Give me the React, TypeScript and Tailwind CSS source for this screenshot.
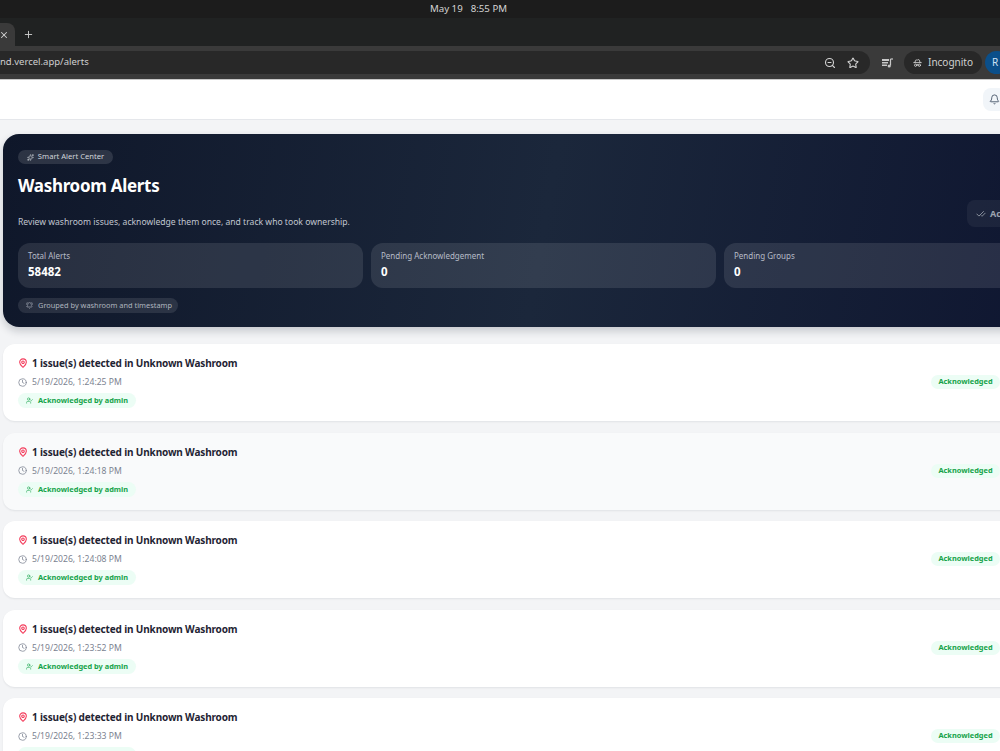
import { Bell, CheckCheck, Clock, MapPin, Plus, Sparkles, Star, UserCheck, X, ZoomOut, HatGlasses, BellRing } from "lucide-react";

const font = "font-['Noto_Sans','Open_Sans',sans-serif]";

const rows = [
  { time: "5/19/2026, 1:24:25 PM", alt: false },
  { time: "5/19/2026, 1:24:18 PM", alt: true },
  { time: "5/19/2026, 1:24:08 PM", alt: false },
  { time: "5/19/2026, 1:23:52 PM", alt: false },
  { time: "5/19/2026, 1:23:33 PM", alt: false },
];

function Stat({ label, value }: { label: string; value: string }) {
  return (
    <div className="h-[45px] flex-1 rounded-xl bg-white/[0.1] px-[10px] pt-[7px]">
      <div className="text-[8px] leading-[12px] text-[#b6bcc7]">{label}</div>
      <div className="mt-[1px] text-[11.5px] font-bold leading-[17px] text-white">{value}</div>
    </div>
  );
}

function AlertRow({ time, alt }: { time: string; alt: boolean }) {
  return (
    <div className={`flex h-[77px] items-start justify-between rounded-xl pl-[15px] pt-[11px] shadow-[0_1px_2px_rgba(15,23,42,0.08)] ${alt ? "bg-[#f9fafb]" : "bg-white"}`}>
      <div className="flex flex-col items-start">
        <div className="flex h-[16px] items-center gap-[4px]">
          <MapPin size={10} strokeWidth={2.6} className="text-[#f43f5e]" />
          <span className="text-[10px] font-bold leading-[14px] tracking-[-0.15px] text-[#1f2433]">1 issue(s) detected in Unknown Washroom</span>
        </div>
        <div className="mt-[4px] flex h-[14px] items-center gap-[5px] text-[#7b8290]">
          <Clock size={9} strokeWidth={2} />
          <span className="text-[8.6px] leading-[12px]">{time}</span>
        </div>
        <div className="mt-[4px] flex h-[15px] items-center gap-[5px] rounded-full bg-[#ecfdf5] px-[8px]">
          <UserCheck size={7} strokeWidth={2} className="text-[#16a34a]" />
          <span className="text-[7.4px] font-bold leading-[11px] text-[#16a34a]">Acknowledged by admin</span>
        </div>
      </div>
      <div className="mt-[20px] mr-[84px] flex h-[14px] w-[69px] shrink-0 items-center justify-center rounded-full bg-[#ecfdf5] text-[7.4px] font-bold text-[#16a34a]">
        Acknowledged
      </div>
    </div>
  );
}

export default function App() {
  return (
    <div className={`h-[751px] w-[1000px] overflow-hidden bg-[#f3f4f6] ${font}`}>
      <div className="flex h-[18px] items-center justify-center gap-[8px] bg-[#1c1c1c] pr-[63px] text-[9.7px] text-[#d4d4d4]">
        <span>May 19</span>
        <span>8:55 PM</span>
      </div>
      <div className="flex h-[28px] items-end bg-[#202222]">
        <div className="flex h-[23px] w-[15px] items-center rounded-tr-lg bg-[#3a3a3a] text-[#d4d4d4]">
          <X size={10} strokeWidth={2.5} className="-ml-[1px]" />
        </div>
        <div className="ml-[8px] flex h-[23px] items-center text-[#cfcfcf]">
          <Plus size={11} strokeWidth={2} />
        </div>
      </div>
      <div className="flex h-[33px] items-center bg-[#3a3a3a]">
        <div className="flex h-[23px] w-[870px] shrink-0 items-center justify-between rounded-r-full bg-[#282828] pr-[11px] text-[9.5px] text-[#d0d0d0]">
          <span>nd.vercel.app/alerts</span>
          <div className="flex items-center gap-[11px] text-[#d4d4d4]">
            <ZoomOut size={12} strokeWidth={2.2} />
            <Star size={12} strokeWidth={2.2} />
          </div>
        </div>
        <svg width="11" height="10" viewBox="0 0 11 10" className="ml-[12px] shrink-0 text-[#c8c8c8]">
          <path d="M0 1h7v2H0zM0 4h6v1.5H0zM0 6.5h5V8H0z" fill="currentColor" />
          <path d="M8.5 1v6.5" stroke="currentColor" strokeWidth="1.2" />
          <path d="M8.5 1H11" stroke="currentColor" strokeWidth="1.2" />
          <circle cx="7.2" cy="8" r="1.6" fill="currentColor" />
        </svg>
        <div className="ml-[11px] flex h-[23px] w-[78px] shrink-0 items-center gap-[6px] rounded-full bg-[#282828] px-[9px] text-[10px] text-[#d0d0d0]">
          <HatGlasses size={12} strokeWidth={2.4} />
          <span>Incognito</span>
        </div>
        <div className="ml-[3px] flex h-[23px] w-[24px] shrink-0 items-center justify-center rounded-full bg-[#0b4f8a] pr-[4px] text-[10px] text-[#cfe3f5]">R</div>
      </div>
      <div className="h-[1px] bg-[#c8c8c8]" />
      <div className="flex h-[40px] items-center border-b border-[#e5e7eb] bg-white pl-[983px]">
        <div className="flex h-[23px] w-[23px] shrink-0 items-center justify-center rounded-lg bg-[#f1f5f9] text-[#475569]">
          <Bell size={11} />
        </div>
      </div>
      <div className="ml-[3px] w-[1081px] pt-[14px]">
        <div className="h-[193px] rounded-2xl bg-[linear-gradient(100deg,#0f172a,#1b273b_50%,#0e1530)] px-[15px] pt-[16px] shadow-[0_4px_8px_rgba(15,23,42,0.2)]">
          <div className="flex h-[14px] w-[95px] items-center justify-center gap-[4px] rounded-full bg-white/[0.12] text-[7.6px] text-[#d1d5db]">
            <Sparkles size={7} />
            <span>Smart Alert Center</span>
          </div>
          <div className="mt-[8px] text-[17px] font-bold leading-[28px] tracking-[-0.3px] text-white">Washroom Alerts</div>
          <div className="flex items-start justify-between">
            <div className="mt-[16px] text-[8.6px] leading-[13px] text-[#c1c6d0]">Review washroom issues, acknowledge them once, and track who took ownership.</div>
            <div className="flex h-[27px] w-[102px] items-center gap-[4px] rounded-lg bg-white/[0.05] pl-[9px] pt-[1px] text-[9px] font-bold text-[#9ca3af]">
              <CheckCheck size={10} />
              <span>Acknowledge</span>
            </div>
          </div>
          <div className="mt-[14px] flex gap-[8px]">
            <Stat label="Total Alerts" value="58482" />
            <Stat label="Pending Acknowledgement" value="0" />
            <Stat label="Pending Groups" value="0" />
          </div>
          <div className="mt-[10px] flex h-[15px] w-[160px] items-center gap-[5px] rounded-full bg-white/[0.1] pl-[8px] text-[7.4px] text-[#aeb4bf]">
            <BellRing size={7} />
            <span>Grouped by washroom and timestamp</span>
          </div>
        </div>
        <div className="mt-[17px] flex flex-col gap-[11.5px]">
          {rows.map((r) => (
            <AlertRow key={r.time} time={r.time} alt={r.alt} />
          ))}
        </div>
      </div>
    </div>
  );
}
